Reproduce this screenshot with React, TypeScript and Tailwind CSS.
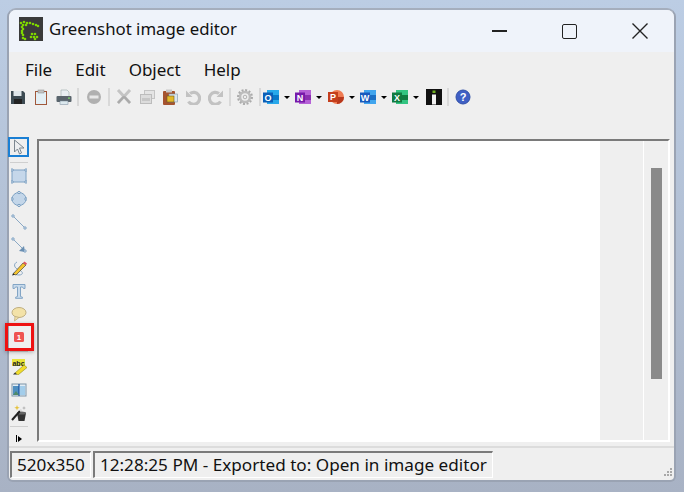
import type { ReactNode } from 'react';

function Ico({ children, w = 16, h = 16 }: { children: ReactNode; w?: number; h?: number }) {
  return (
    <svg width={w} height={h} viewBox={`0 0 ${w} ${h}`} className="block shrink-0">
      {children}
    </svg>
  );
}

const logoDots = [
  [2, 6], [5, 5], [8, 6], [11, 6], [14, 7], [17, 8], [19, 9],
  [4, 8], [3, 10], [4, 12], [3, 14], [3, 16], [4, 18], [4, 21], [6, 22],
  [13, 17], [16, 17], [12, 20], [15, 20], [18, 20], [16, 22], [7, 8],
];

function Logo() {
  return (
    <svg width="24" height="24" viewBox="0 0 24 24" className="block shrink-0">
      <rect width="24" height="24" fill="#3a3a3a" />
      {logoDots.map(([x, y]) => (
        <circle key={`${x}-${y}`} cx={x} cy={y} r="1.3" fill="#7ed600" />
      ))}
    </svg>
  );
}

const Save = () => (
  <Ico>
    <path d="M1 2h12l2 2v11H1z" fill="#3c4a52" />
    <rect x="3.5" y="2" width="8" height="5" fill="#dfe6ea" />
    <rect x="4" y="10" width="8" height="5" fill="#222" />
  </Ico>
);
const Clipboard = () => (
  <Ico>
    <rect x="2.5" y="2.5" width="11" height="13" fill="#e3eff5" stroke="#a1583a" />
    <rect x="5" y="1" width="6" height="3" fill="#c4c4c4" stroke="#888" strokeWidth=".5" />
  </Ico>
);
const Printer = () => (
  <Ico>
    <path d="M5 1h6l2 2v5H5z" fill="#e8eef2" stroke="#9aa" strokeWidth=".6" />
    <rect x="0.5" y="7" width="15" height="6" rx="1" fill="#59646c" />
    <rect x="4" y="12" width="8" height="3.5" fill="#dbe8ee" stroke="#789" strokeWidth=".5" />
    <rect x="12" y="8.5" width="2" height="1.2" fill="#7fdc6a" />
  </Ico>
);
const Minus = () => (
  <Ico>
    <circle cx="8" cy="8" r="7" fill="#b0b0b0" />
    <rect x="3.5" y="6.5" width="9" height="3" fill="#e7e7e7" />
  </Ico>
);
const Cut = () => (
  <Ico>
    <path d="M2 1l12 13M14 1L2 14" stroke="#c4c4c4" strokeWidth="3" />
    <path d="M8 7.5l6 6.5M8 7.5L2 14" stroke="#aaa" strokeWidth="2.2" />
  </Ico>
);
const CopyIco = () => (
  <Ico>
    <rect x="5.5" y="1.5" width="10" height="8" fill="#e4e4e4" stroke="#c4c4c4" />
    <rect x="1.5" y="5.5" width="11" height="9" fill="#dcdcdc" stroke="#bcbcbc" />
    <rect x="3" y="9" width="8" height="3" fill="#c6c6c6" />
  </Ico>
);
const Paste = () => (
  <Ico>
    <rect x="1" y="2" width="12" height="14" rx="1" fill="#a5532f" />
    <rect x="4" y="0.5" width="6" height="3" fill="#c9c9c9" />
    <rect x="7" y="5" width="8.5" height="8" fill="#dbe6ee" stroke="#7a93a8" strokeWidth=".6" />
    <rect x="5" y="7" width="7" height="6" fill="#e4b92a" stroke="#6b5a1e" strokeWidth=".6" />
  </Ico>
);
const Undo = ({ flip = false }: { flip?: boolean }) => (
  <Ico>
    <g transform={flip ? 'translate(16 0) scale(-1 1)' : undefined}>
      <path d="M5 4.5a6 6 0 1 1-1.5 8" fill="none" stroke="#c2c2c2" strokeWidth="3.2" />
      <path d="M1 1.5v6.5h6.5z" fill="#c2c2c2" />
    </g>
  </Ico>
);
const Gear = () => (
  <Ico>
    <circle cx="8" cy="8" r="5" fill="none" stroke="#bdbdbd" strokeWidth="2.6" />
    <circle cx="8" cy="8" r="7" fill="none" stroke="#ababab" strokeWidth="2" strokeDasharray="2 1.66" />
    <circle cx="8" cy="8" r="1.8" fill="#eee" stroke="#999" strokeWidth=".7" />
  </Ico>
);
const Office = ({ back, mid, front, letter }: { back: string; mid: string; front: string; letter: string }) => (
  <Ico>
    <rect x="4" y="1" width="12" height="14" fill={back} />
    <rect x="4" y="6" width="12" height="5" fill={mid} />
    <rect x="0" y="3.5" width="10" height="10" fill={front} />
    <text x="5" y="11.5" textAnchor="middle" fontSize="9" fontWeight="700" fill="#fff" fontFamily="Liberation Sans, sans-serif">
      {letter}
    </text>
  </Ico>
);
const Ppt = () => (
  <Ico>
    <circle cx="9" cy="8" r="7" fill="#ef7b52" />
    <path d="M9 8h7a7 7 0 0 1-7 7z" fill="#b7381c" />
    <rect x="0" y="3" width="10" height="10" fill="#c43e1c" />
    <text x="5" y="11" textAnchor="middle" fontSize="9" fontWeight="700" fill="#fff" fontFamily="Liberation Sans, sans-serif">
      P
    </text>
  </Ico>
);
const Info = () => (
  <Ico>
    <rect width="16" height="16" fill="#111" />
    <rect x="6.5" y="1.5" width="3" height="2.5" fill="#6fae1e" />
    <rect x="6" y="5.5" width="4" height="10" fill="#f2f2f2" />
  </Ico>
);
const Help = () => (
  <Ico>
    <circle cx="8" cy="8" r="7" fill="#3f5fc4" stroke="#3050a8" />
    <text x="8" y="12" textAnchor="middle" fontSize="11" fontWeight="700" fill="#fff" fontFamily="Liberation Sans, sans-serif">
      ?
    </text>
  </Ico>
);

const Pointer = () => (
  <Ico>
    <path d="M3.5 1v12l3-3 2 5 2-1-2-5h4.5z" fill="#eceef0" stroke="#7c8790" />
  </Ico>
);
const handle = (x: number, y: number) => <circle cx={x} cy={y} r="1.2" fill="#eef3f8" stroke="#5f8cb5" strokeWidth=".8" />;
const RectIco = () => (
  <Ico>
    <rect x="1" y="2" width="14" height="12" fill="#c5d7ea" stroke="#7ea2c4" />
    {handle(1, 2)}{handle(15, 2)}{handle(1, 14)}{handle(15, 14)}
  </Ico>
);
const Ellipse = () => (
  <Ico>
    <ellipse cx="8" cy="8" rx="7" ry="6.5" fill="#c3d6e9" stroke="#7ea2c4" />
    {handle(8, 1.5)}{handle(1, 8)}{handle(15, 8)}{handle(8, 14.5)}
  </Ico>
);
const Line = () => (
  <Ico>
    <path d="M2 2l12 12" stroke="#8aa8c4" />
    {handle(2, 2)}{handle(14, 14)}
  </Ico>
);
const Arrow = () => (
  <Ico>
    <path d="M2 2l12 12" stroke="#8aa8c4" />
    <path d="M14 15l-1-6-5 5z" fill="#6a8fb2" />
    {handle(2, 2)}{handle(14, 14)}
  </Ico>
);
const Pencil = () => (
  <Ico>
    <path d="M6 2C2 4 3 8 8 10c5 2 4 5 0 5-3 0-5-1-5-3" fill="none" stroke="#8aa8c4" />
    <path d="M2 14L12 3l3 2L5 15z" fill="#f4c430" stroke="#333" strokeWidth=".6" />
    <path d="M12 3l1.5-1.5 2.5 2L15 5z" fill="#e0555f" />
    <path d="M1 15.5l1-2 2 1.3z" fill="#222" />
  </Ico>
);
const TextIco = () => (
  <Ico>
    <path d="M2 1.5h12v4h-1.5l-1-1.5H9.5v9.5l2 .8v1H4.5v-1l2-.8V4H4.5l-1 1.5H2z" fill="#c9dbec" stroke="#83a5c5" />
  </Ico>
);
const Bubble = () => (
  <Ico>
    <ellipse cx="8" cy="6.5" rx="7" ry="5" fill="#f3e2a8" stroke="#bfae80" />
    <path d="M4 10.5L3.5 15 8 11.5z" fill="#f3e2a8" stroke="#bfae80" strokeWidth=".8" />
  </Ico>
);
const Counter = () => (
  <Ico>
    <rect x="3" y="3" width="10" height="10" rx="1.5" fill="#ef5350" />
    <text x="8" y="11" textAnchor="middle" fontSize="8" fontWeight="700" fill="#fff" fontFamily="Liberation Sans, sans-serif">
      1
    </text>
  </Ico>
);
const Highlight = () => (
  <Ico>
    <rect x="1" y="0" width="13" height="7" fill="#e8e43a" />
    <text x="7.5" y="6.5" textAnchor="middle" fontSize="7" fontWeight="700" fill="#222" fontFamily="Liberation Sans, sans-serif">
      abc
    </text>
    <path d="M4 14l9-8 3 2.5-9 7.5z" fill="#f2dc2c" stroke="#8e8b1d" strokeWidth=".6" />
    <path d="M2 15.5l2-2 2 2z" fill="#333" />
  </Ico>
);
const Obfuscate = () => (
  <Ico>
    <rect x="1" y="2" width="14" height="12" fill="#e2edf5" stroke="#7f95a8" />
    <rect x="2" y="4" width="6" height="9" fill="#4f8fc0" />
    <rect x="9" y="4" width="5" height="9" fill="#a3cdea" />
    <path d="M8 2v12" stroke="#1450a0" strokeWidth="1.2" />
    <path d="M2 13l3-4 3 4z" fill="#4f8a6a" />
  </Ico>
);
const Wand = () => (
  <Ico>
    <path d="M6 8h9l-1.5 8H7.5z" fill="#333" />
    <ellipse cx="10.5" cy="8" rx="4.5" ry="1.5" fill="#666" />
    <path d="M1 15L9 6" stroke="#222" strokeWidth="2" />
    <path d="M9 6l1.5-1.5" stroke="#ddd" strokeWidth="2" />
    <path d="M6 0l.7 2 2 .7-2 .7L6 5.5l-.7-2-2-.7 2-.7z" fill="#e5c23a" />
    <path d="M13 1l.5 1.5 1.5.5-1.5.5L13 5l-.5-1.5L11 3l1.5-.5z" fill="#aaa" />
  </Ico>
);

function ToolBtn({ children, w = 'w-[23px]' }: { children: ReactNode; w?: string }) {
  return <div className={`flex h-5 items-center justify-center ${w}`}>{children}</div>;
}

function Sep() {
  return <div className="mx-[2px] h-[18px] w-[2px] bg-[#d9d9d9]" />;
}

function Caret() {
  return <div className="mt-[1px] ml-[1px] h-0 w-0 border-x-[3px] border-t-[3px] border-x-transparent border-t-black" />;
}

function DropBtn({ children }: { children: ReactNode }) {
  return (
    <div className="flex h-5 w-[32.25px] items-center gap-[4px]">
      {children}
      <Caret />
    </div>
  );
}

function VTool({ children }: { children: ReactNode }) {
  return <div className="flex h-[23px] items-center justify-center">{children}</div>;
}

function VSep() {
  return <div className="mx-auto h-px w-[18px] bg-[#cfcfcf]" />;
}

const sunkenCell =
  'flex h-[27px] items-center border-t-2 border-r border-b border-l-2 border-t-[#7a7a7a] border-r-white border-b-white border-l-[#7a7a7a] px-[5px]';

export default function App() {
  return (
    <div className="h-[492px] w-[684px] overflow-hidden bg-gradient-to-b from-[#bccde4] to-[#a8b2c4] pt-[8px] pl-[7px] font-['Noto_Sans',sans-serif]">
      <div className="flex h-[474px] w-[669px] flex-col rounded-t-[9px] rounded-b-[6px] border-2 border-[#9aa3b3] border-t-[#a5aebd] bg-[#efefef] text-[#111]">
        <div className="flex h-[42px] shrink-0 items-start rounded-t-[7px] bg-[#eff3fa] pt-[7px] pl-[10px]">
          <Logo />
          <span className="mt-[4px] ml-[6px] text-[16.8px] leading-none">Greenshot image editor</span>
          <div className="mt-[-7px] ml-auto flex">
            <div className="flex h-[42px] w-[70px] items-center justify-center">
              <div className="h-[1.5px] w-[15px] bg-[#222]" />
            </div>
            <div className="flex h-[42px] w-[70px] items-center justify-center">
              <div className="h-[15px] w-[15px] rounded-[2px] border-[1.5px] border-[#222]" />
            </div>
            <div className="flex h-[42px] w-[70px] items-center justify-center pl-[2px]">
              <svg width="16" height="16" viewBox="0 0 16 16">
                <path d="M.5.5l15 15M15.5.5l-15 15" stroke="#222" strokeWidth="1.4" />
              </svg>
            </div>
          </div>
        </div>

        <div className="flex h-[33px] shrink-0 items-center gap-[23px] pt-[2px] pl-[16px] text-[17px] leading-none">
          <span>File</span>
          <span>Edit</span>
          <span>Object</span>
          <span>Help</span>
        </div>

        <div className="-ml-[3px] flex h-[24px] shrink-0 items-center">
          <ToolBtn><Save /></ToolBtn>
          <ToolBtn><Clipboard /></ToolBtn>
          <ToolBtn><Printer /></ToolBtn>
          <Sep />
          <ToolBtn w="w-[25px]"><Minus /></ToolBtn>
          <Sep />
          <ToolBtn><Cut /></ToolBtn>
          <ToolBtn><CopyIco /></ToolBtn>
          <ToolBtn><Paste /></ToolBtn>
          <ToolBtn><Undo /></ToolBtn>
          <ToolBtn><Undo flip /></ToolBtn>
          <Sep />
          <ToolBtn w="w-[24px]"><Gear /></ToolBtn>
          <Sep />
          <DropBtn><Office back="#28a8ea" mid="#0a78c8" front="#0a5fb8" letter="O" /></DropBtn>
          <DropBtn><Office back="#b561d6" mid="#8b2fb0" front="#7719aa" letter="N" /></DropBtn>
          <DropBtn><Ppt /></DropBtn>
          <DropBtn><Office back="#41a5ee" mid="#1b6fc4" front="#185abd" letter="W" /></DropBtn>
          <DropBtn><Office back="#33c481" mid="#107c41" front="#0f7b40" letter="X" /></DropBtn>
          <div className="-ml-[2px]"><ToolBtn><Info /></ToolBtn></div>
          <Sep />
          <ToolBtn w="w-[24px]"><Help /></ToolBtn>
        </div>

        <div className="flex min-h-0 flex-1 pt-[30px]">
          <div className="relative w-[28px] shrink-0 pr-[8px]">
            <div className="-mt-[2px] -ml-px flex h-[20px] w-[21px] items-center justify-center border-2 border-[#1a7fd4]">
              <Pointer />
            </div>
            <div className="mt-[5px] mb-[1px]"><VSep /></div>
            <VTool><RectIco /></VTool>
            <VTool><Ellipse /></VTool>
            <VTool><Line /></VTool>
            <VTool><Arrow /></VTool>
            <VTool><Pencil /></VTool>
            <VTool><TextIco /></VTool>
            <VTool><Bubble /></VTool>
            <VTool><Counter /></VTool>
            <div className="my-[3px]"><VSep /></div>
            <VTool><Highlight /></VTool>
            <VTool><Obfuscate /></VTool>
            <VTool><Wand /></VTool>
            <div className="mt-[2px]"><VSep /></div>
            <div className="mt-[8px] flex items-center justify-center">
              <div className="h-[7px] w-[1.5px] bg-black" />
              <div className="ml-[1px] h-0 w-0 border-y-[3.5px] border-l-[4px] border-y-transparent border-l-black" />
            </div>
            <div className="absolute top-[184px] left-[-4px] z-10 h-[28px] w-[29px] border-[3px] border-[#ee1111] shadow-[0_1px_4px_rgba(0,0,0,0.3)]" />
          </div>
          <div className="flex h-[303px] w-[633px] shrink-0 border-2 border-t-[#7a7a7a] border-r-white border-b-white border-l-[#7a7a7a]">
            <div className="flex flex-1 justify-start pl-[41px]">
              <div className="h-full w-[520px] bg-white" />
            </div>
            <div className="w-[25px] shrink-0 border-l border-l-white pt-[27px] pl-[7px]">
              <div className="h-[211px] w-[11px] bg-[#8a8a8a]" />
            </div>
          </div>
        </div>

        <div className="relative flex h-[34px] shrink-0 items-center gap-[2px] rounded-b-[4px] border-t-2 border-t-[#dcdcdc] pl-[1px] text-[17.15px] leading-none">
          <div className={sunkenCell}>520x350</div>
          <div className={sunkenCell}>12:28:25 PM - Exported to: Open in image editor</div>
          <svg width="12" height="12" viewBox="0 0 12 12" className="absolute right-[1px] bottom-[1px]">
            <g fill="#a8a8a8">
              <rect x="9" y="1" width="2" height="2" />
              <rect x="6" y="4" width="2" height="2" />
              <rect x="9" y="4" width="2" height="2" />
              <rect x="3" y="7" width="2" height="2" />
              <rect x="6" y="7" width="2" height="2" />
              <rect x="9" y="7" width="2" height="2" />
            </g>
          </svg>
        </div>
      </div>
    </div>
  );
}
